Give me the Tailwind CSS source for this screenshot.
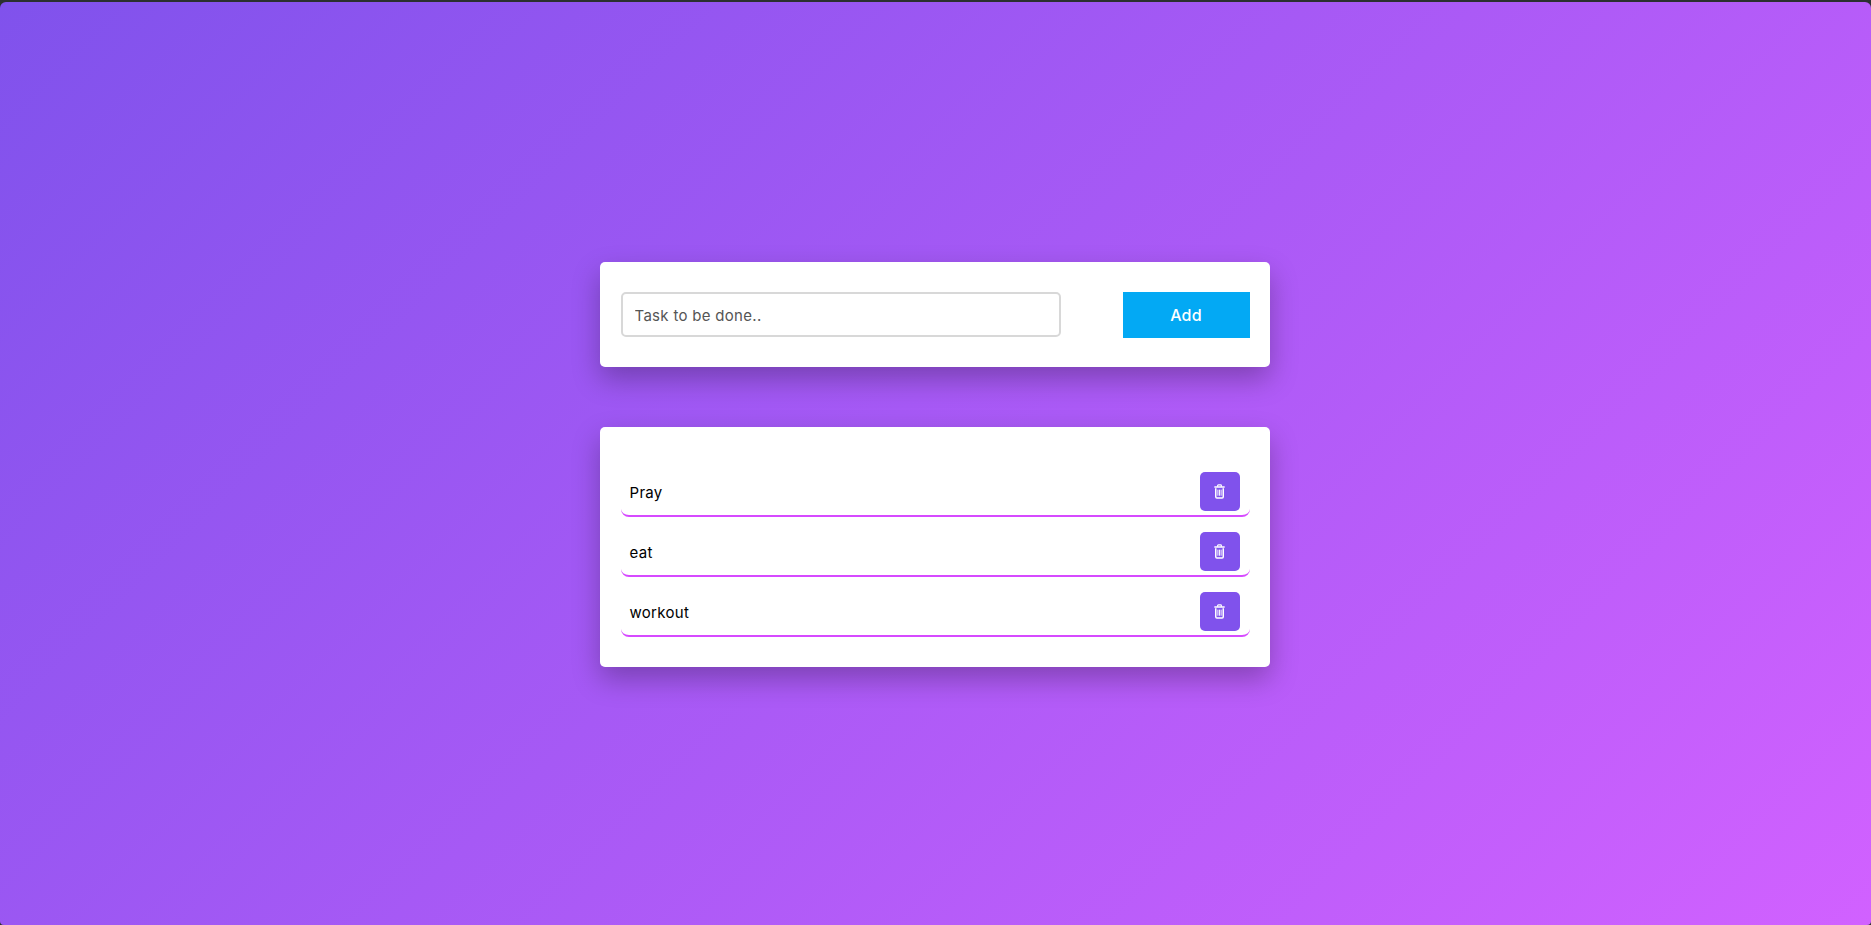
<!doctype html>
<html><head><meta charset="utf-8"><title>Todo</title>
<script src="https://cdn.jsdelivr.net/npm/@tailwindcss/browser@4"></script></head>
<body class="bg-[#2b3030]">
<div class="h-[925px] pt-[2px] overflow-hidden font-['Inter',sans-serif]">
<main class="h-[923px] rounded-t-[6px] rounded-b-[4px] bg-linear-[135deg,#8052ec,#d161ff] pt-[260px] flex flex-col items-center">
  <section class="w-[670px] mr-[1px] h-[105px] bg-white rounded-[5px] shadow-[0_12px_28px_rgba(0,0,0,0.27)] pl-[20.5px] pr-[20.5px] pt-[30px] flex justify-between items-start">
    <input placeholder="Task to be done.." class="w-[440px] h-[45px] border-2 border-[#d8d8d8] rounded-[5px] px-[12px] pt-[1px] text-[15px] tracking-[0.3px] text-[#555] placeholder:text-[#555] outline-none">
    <button class="w-[127px] h-[46px] bg-[#03a9f4] text-white text-[16px] tracking-[0.2px] font-medium">Add</button>
  </section>
  <section class="w-[670px] mr-[1px] h-[240px] mt-[60px] bg-white rounded-[5px] shadow-[0_12px_28px_rgba(0,0,0,0.27)] pl-[20.5px] pr-[20.5px] pt-[45px]">
    <ul class="flex flex-col gap-[15px]">
      <li class="h-[45px] border-b-2 border-[#d64aff] rounded-[8px] pl-[9px] pr-[10px] flex justify-between items-start">
        <span class="text-[15px] tracking-[0.3px] leading-[42px] text-black">Pray</span>
        <button class="w-[40px] h-[39px] bg-[#8052ec] rounded-[5px] pr-[1px] flex items-center justify-center"><svg class="w-[13px] h-[15px]" viewBox="0 0 12 16" fill="none" stroke="#fff"><path d="M2 4.5V13.5Q2 15 3.2 15H8.8Q10 15 10 13.5V4.5" stroke-width="1.6"/><path d="M.5 3.2H11.5" stroke-width="1.6"/><path d="M4 3V1.8Q4 1 4.8 1H7.2Q8 1 8 1.8V3" stroke-width="1.3"/><path d="M4.3 6V12.5M6 6V12.5M7.7 6V12.5" stroke-width="1"/></svg></button>
      </li>
      <li class="h-[45px] border-b-2 border-[#d64aff] rounded-[8px] pl-[9px] pr-[10px] flex justify-between items-start">
        <span class="text-[15px] tracking-[0.3px] leading-[42px] text-black">eat</span>
        <button class="w-[40px] h-[39px] bg-[#8052ec] rounded-[5px] pr-[1px] flex items-center justify-center"><svg class="w-[13px] h-[15px]" viewBox="0 0 12 16" fill="none" stroke="#fff"><path d="M2 4.5V13.5Q2 15 3.2 15H8.8Q10 15 10 13.5V4.5" stroke-width="1.6"/><path d="M.5 3.2H11.5" stroke-width="1.6"/><path d="M4 3V1.8Q4 1 4.8 1H7.2Q8 1 8 1.8V3" stroke-width="1.3"/><path d="M4.3 6V12.5M6 6V12.5M7.7 6V12.5" stroke-width="1"/></svg></button>
      </li>
      <li class="h-[45px] border-b-2 border-[#d64aff] rounded-[8px] pl-[9px] pr-[10px] flex justify-between items-start">
        <span class="text-[15px] tracking-[0.3px] leading-[42px] text-black">workout</span>
        <button class="w-[40px] h-[39px] bg-[#8052ec] rounded-[5px] pr-[1px] flex items-center justify-center"><svg class="w-[13px] h-[15px]" viewBox="0 0 12 16" fill="none" stroke="#fff"><path d="M2 4.5V13.5Q2 15 3.2 15H8.8Q10 15 10 13.5V4.5" stroke-width="1.6"/><path d="M.5 3.2H11.5" stroke-width="1.6"/><path d="M4 3V1.8Q4 1 4.8 1H7.2Q8 1 8 1.8V3" stroke-width="1.3"/><path d="M4.3 6V12.5M6 6V12.5M7.7 6V12.5" stroke-width="1"/></svg></button>
      </li>
    </ul>
  </section>
</main>
</div>
</body></html>
